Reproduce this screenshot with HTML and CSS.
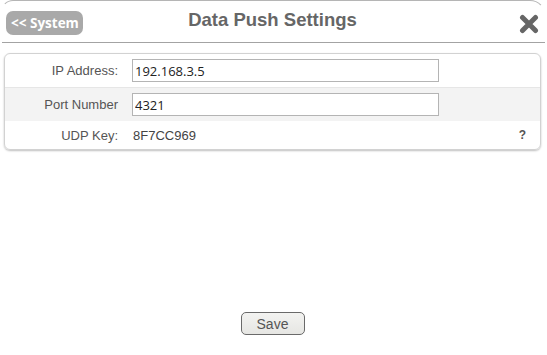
FILE: index.html
```html
<!DOCTYPE html>
<html>
<head>
<meta charset="utf-8">
<link rel="stylesheet" href="styles.css">
</head>
<body>
<div class="dialog">
  <div class="header">
    <div class="left"><span class="back">&lt;&lt; System</span></div>
    <h1 class="title">Data Push Settings</h1>
    <div class="right">
      <svg class="close" width="20" height="20" viewBox="0 0 20 20">
        <path d="M3.5 3.5 L16.5 16.5 M16.5 3.5 L3.5 16.5" stroke="#666" stroke-width="5" stroke-linecap="round"/>
      </svg>
    </div>
  </div>
  <div class="panel">
    <div class="row r1">
      <span class="label">IP Address:</span>
      <input class="field" type="text" value="192.168.3.5">
    </div>
    <div class="row r2">
      <span class="label">Port Number</span>
      <input class="field" type="text" value="4321">
    </div>
    <div class="row r3">
      <span class="label">UDP Key:</span>
      <span class="value">8F7CC969</span>
      <span class="help">?</span>
    </div>
  </div>
  <div class="footer">
    <button class="save">Save</button>
  </div>
</div>
</body>
</html>
```
FILE: styles.css
```css
html, body {
  margin: 0;
  padding: 0;
  background: #fff;
  height: 100%;
}
body {
  font-family: "Liberation Sans", Arial, sans-serif;
  color: #555;
}
.dialog {
  box-sizing: border-box;
  height: 355px;
  margin: 0 1px;
  padding-top: 1px;
  display: flex;
  flex-direction: column;
  border-top: 1px solid #b5b5b5;
  border-left: 1px solid transparent;
  border-right: 1px solid transparent;
  border-radius: 12px 16px 0 0;
}
.header {
  height: 40px;
  display: grid;
  grid-template-columns: 1fr auto 1fr;
  align-items: center;
  border-bottom: 1px solid #a3a3a3;
  padding: 0 6px 0 4px;
}
.left { display: flex; }
.back {
  display: inline-block;
  background: #a9a9a9;
  color: #fff;
  font-family: "Open Sans", sans-serif;
  font-weight: 700;
  font-size: 13.5px;
  line-height: 24px;
  height: 24px;
  padding: 0 4px 0 5px;
  border-radius: 7px;
  margin-top: 1px;
}
.title {
  margin: 0;
  font-size: 18.5px;
  font-weight: 700;
  color: #666;
  margin-bottom: 4px;
}
.right {
  display: flex;
  justify-content: flex-end;
  padding-top: 3px;
}
.close { display: block; margin-right: 0; }
.panel {
  margin: 10px 4px 0 2px;
  border: 1px solid #d2d2d2;
  border-radius: 6px;
  box-shadow: 0 1px 2px rgba(0,0,0,0.25);
  overflow: hidden;
}
.row {
  display: flex;
  align-items: center;
  font-size: 13px;
}
.r1 { height: 33px; border-bottom: 1px solid #e6e6e6; }
.r2 { height: 33px; background: #f3f3f3; }
.r3 { height: 28px; }
.label {
  width: 113px;
  text-align: right;
  color: #555;
  margin-right: 14px;
}
.field {
  box-sizing: border-box;
  width: 307px;
  height: 23px;
  border: 1px solid #b4b4b4;
  background: #fff;
  font-family: "Open Sans", sans-serif;
  font-size: 13px;
  color: #222;
  padding: 0 2px;
  margin: 0;
  outline: none;
}
.value {
  color: #444;
  margin-left: 1px;
}
.help {
  margin-left: auto;
  margin-right: 14px;
  font-weight: 700;
  font-size: 12px;
  color: #555;
}
.footer {
  margin-top: auto;
  display: flex;
  justify-content: center;
  padding-bottom: 20px;
  padding-right: 2px;
}
.save {
  width: 64px;
  height: 23px;
  border: 1px solid #6a6a6a;
  border-radius: 5px;
  background: linear-gradient(#f3f3f1, #e6e6e3);
  font-family: "Liberation Sans", Arial, sans-serif;
  font-size: 14px;
  color: #555;
  padding: 0;
}
```
